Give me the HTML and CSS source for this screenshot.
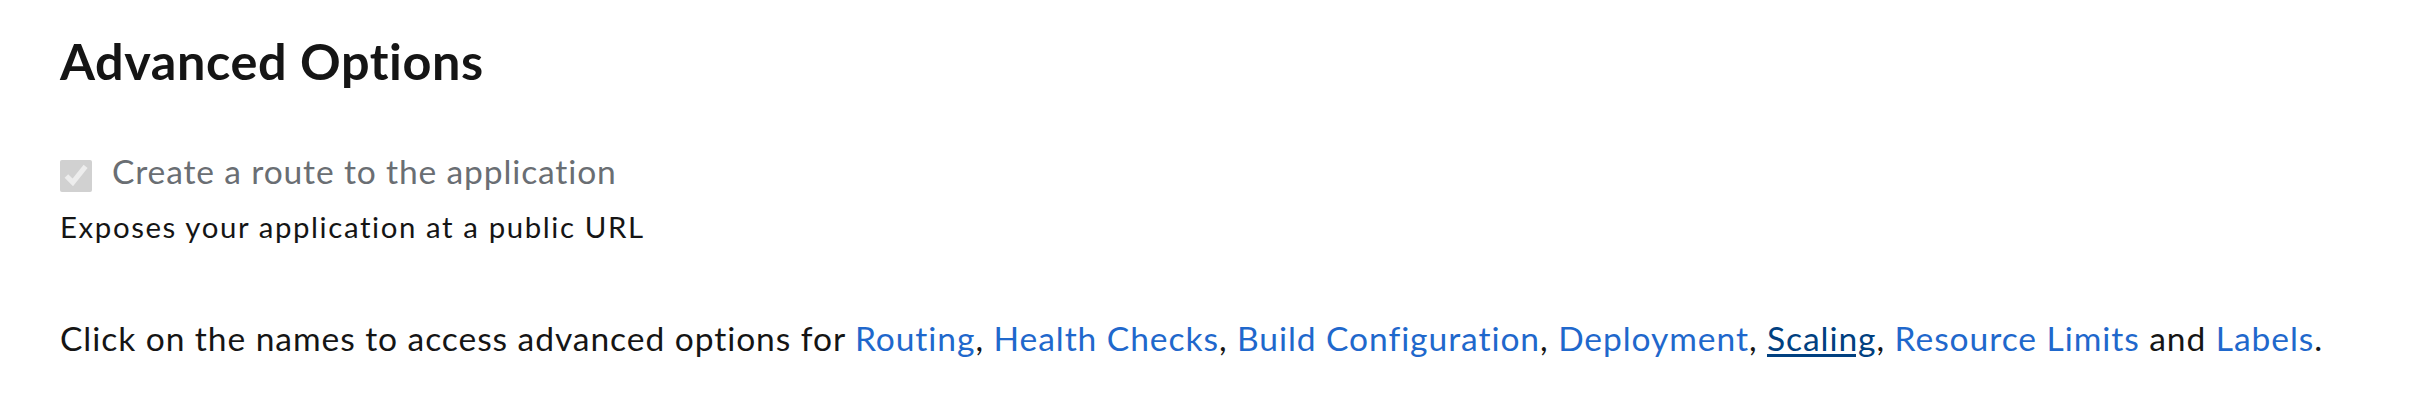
FILE: index.html
```html
<!DOCTYPE html>
<html lang="en">
<head>
<meta charset="utf-8">
<title>Advanced Options</title>
<link rel="stylesheet" href="styles.css">
</head>
<body>
<section class="advanced">
  <h2 class="title">Advanced Options</h2>
  <div class="field">
    <label class="check">
      <input type="checkbox" class="check-input" checked disabled>
      <span class="check-label">Create a route to the application</span>
    </label>
    <div class="helper">Exposes your application at a public URL</div>
  </div>
  <p class="links">Click on the names to access advanced options for <a href="#" class="link">Routing</a>, <a href="#" class="link">Health Checks</a>, <a href="#" class="link">Build Configuration</a>, <a href="#" class="link">Deployment</a>, <a href="#" class="link link-hover">Scaling</a>, <a href="#" class="link">Resource Limits</a> and <a href="#" class="link">Labels</a>.</p>
</section>
</body>
</html>
```

FILE: styles.css
```css
html, body {
  margin: 0;
  padding: 0;
  background: #ffffff;
}

body {
  font-family: "Lato", "Liberation Sans", sans-serif;
  color: #151515;
}

.advanced {
  padding: 31px 60px 0 60px;
}

.title {
  margin: 0;
  font-size: 50.4px;
  font-weight: 700;
  line-height: 1.2;
  letter-spacing: 0.6px;
  color: #151515;
}

.field {
  margin-top: 60px;
}

.check {
  display: flex;
  align-items: flex-start;
  gap: 20px;
}

.check-input {
  margin: 9px 0 0 0;
  width: 32px;
  height: 32px;
  flex: none;
}

.check-label {
  font-size: 33.6px;
  line-height: 1.2;
  letter-spacing: 0.85px;
  color: #6a6e73;
}

.helper {
  margin-top: 17px;
  font-size: 29.4px;
  line-height: 1.2;
  letter-spacing: 1.6px;
  color: #151515;
}

.links {
  margin: 73px 0 0 0;
  font-size: 33.6px;
  line-height: 1.2;
  letter-spacing: 0.93px;
  color: #151515;
}

.link {
  color: #1f68cc;
  text-decoration: none;
}

.link-hover {
  color: #004080;
  text-decoration: underline;
  text-underline-offset: 3px;
}
```
